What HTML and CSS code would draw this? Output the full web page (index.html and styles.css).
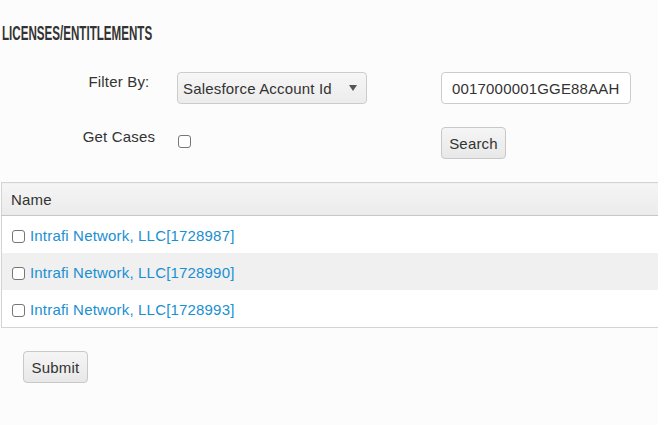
FILE: index.html
```html
<!DOCTYPE html>
<html>
<head>
<meta charset="utf-8">
<link rel="stylesheet" href="styles.css">
</head>
<body>
<div class="page">
  <h1 class="title">Licenses/Entitlements</h1>
  <div class="filters">
    <div class="label">Filter By:</div>
    <div class="cell">
      <div class="select-wrap">
        <select class="select"><option>Salesforce Account Id</option></select>
      </div>
    </div>
    <div class="cell">
      <input class="input" type="text" value="0017000001GGE88AAH">
    </div>
    <div class="label">Get Cases</div>
    <div class="cell"><input class="check get-cases" type="checkbox"></div>
    <div class="cell"><button class="btn">Search</button></div>
  </div>
  <div class="table-wrap">
    <table class="grid">
      <thead>
        <tr><th>Name</th></tr>
      </thead>
      <tbody>
        <tr><td><input class="check row-check" type="checkbox"><a class="link" href="#">Intrafi Network, LLC[1728987]</a></td></tr>
        <tr class="alt"><td><input class="check row-check" type="checkbox"><a class="link" href="#">Intrafi Network, LLC[1728990]</a></td></tr>
        <tr><td><input class="check row-check" type="checkbox"><a class="link" href="#">Intrafi Network, LLC[1728993]</a></td></tr>
      </tbody>
    </table>
  </div>
  <div class="actions"><button class="btn">Submit</button></div>
</div>
</body>
</html>
```

FILE: styles.css
```css
html, body {
  margin: 0;
  padding: 0;
  background: #fcfcfc;
  overflow: hidden;
}
body {
  font-family: "Liberation Sans", Arial, sans-serif;
  font-size: 15px;
  letter-spacing: 0.18px;
  color: #333;
}
.page {
  padding-top: 22px;
}
.title {
  margin: 0 0 0 2px;
  font-family: "Liberation Sans Narrow", "Liberation Sans", sans-serif;
  font-weight: bold;
  font-size: 20px;
  line-height: 23px;
  letter-spacing: 0;
  text-transform: uppercase;
  color: #333;
  transform-origin: left center;
  transform: scaleX(0.58);
  white-space: nowrap;
}
.filters {
  display: grid;
  grid-template-columns: 99px 264px 190px;
  grid-template-rows: 32px 32px;
  row-gap: 23px;
  margin: 27px 0 0 78px;
}
.label {
  width: 82px;
  text-align: center;
  line-height: 20px;
}
.cell {
  display: flex;
  align-items: flex-start;
}
.select-wrap {
  position: relative;
  width: 190px;
  height: 32px;
}
.select-wrap::after {
  content: "";
  position: absolute;
  right: 10px;
  top: 13px;
  border-left: 4px solid transparent;
  border-right: 4px solid transparent;
  border-top: 6px solid #555;
  pointer-events: none;
}
.select {
  appearance: none;
  -webkit-appearance: none;
  width: 190px;
  height: 32px;
  margin: 0;
  padding: 0 0 0 5px;
  border: 1px solid #ccc;
  border-radius: 4px;
  background: linear-gradient(#f6f6f6, #ececec);
  font-family: inherit;
  font-size: 15px;
  letter-spacing: 0.18px;
  color: #333;
}
.input {
  box-sizing: border-box;
  width: 190px;
  height: 32px;
  margin: 0;
  padding: 0 0 0 10px;
  border: 1px solid #ccc;
  border-radius: 4px;
  background: #fff;
  font-family: inherit;
  font-size: 15px;
  letter-spacing: 0.18px;
  color: #333;
}
.check {
  appearance: none;
  -webkit-appearance: none;
  box-sizing: border-box;
  width: 13px;
  height: 13px;
  margin: 0;
  border: 1px solid #767676;
  border-radius: 3px;
  background: #fff;
}
.get-cases {
  margin: 8px 0 0 1px;
}
.btn {
  box-sizing: border-box;
  width: 65px;
  height: 32px;
  padding: 0;
  margin: 0;
  border: 1px solid #c8c8c8;
  border-radius: 4px;
  background: linear-gradient(#f5f5f5, #e8e8e8);
  font-family: inherit;
  font-size: 15px;
  letter-spacing: 0.18px;
  color: #333;
}
.table-wrap {
  margin: 23px 0 0 1px;
}
.grid {
  width: 100%;
  border-collapse: collapse;
  border: 1px solid #d4d4d4;
  border-right: 0;
  background: #fff;
}
.grid th {
  height: 32px;
  padding: 0 0 0 9px;
  text-align: left;
  font-weight: normal;
  background: linear-gradient(#f5f5f5, #ebebeb);
  border-bottom: 1px solid #c6c6c6;
}
.grid td {
  height: 37px;
  padding: 0 0 0 10px;
  white-space: nowrap;
}
.grid tr.alt td {
  background: #f0f0f0;
}
.row-check {
  vertical-align: middle;
  margin: 0 5px 0 0;
  position: relative;
  top: 1px;
}
.link {
  color: #1a8fd2;
  text-decoration: none;
  vertical-align: middle;
}
.actions {
  margin: 23px 0 0 23px;
}
```
